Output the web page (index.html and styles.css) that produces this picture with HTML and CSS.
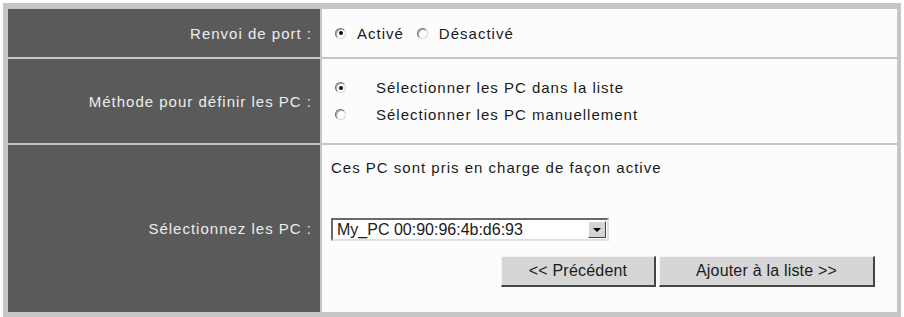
FILE: index.html
```html
<!DOCTYPE html>
<html>

<head>
    <title>Renvoi de port</title>
    <link rel="stylesheet" href="styles.css">
</head>

<body>
    <div class="frame">
        <div class="label row1">Renvoi de port :</div>
        <div class="value row1">
            <span class="choice"><span class="radio checked"></span>Activé</span>
            <span class="choice"><span class="radio"></span>Désactivé</span>
        </div>

        <div class="label row2">Méthode pour définir les PC :</div>
        <div class="value row2 stack">
            <div class="line"><span class="radio checked"></span><span class="wide">Sélectionner les PC dans la liste</span></div>
            <div class="line"><span class="radio"></span><span class="wide">Sélectionner les PC manuellement</span></div>
        </div>

        <div class="label row3">Sélectionnez les PC :</div>
        <div class="value row3 pcs">
            <div class="note">Ces PC sont pris en charge de façon active</div>
            <div class="select">
                <span class="select-text">My_PC 00:90:96:4b:d6:93</span>
                <span class="select-btn"><span class="arrow"></span></span>
            </div>
            <div class="button-container">
                <button class="btn prev">&lt;&lt; Précédent</button>
                <button class="btn add">Ajouter à la liste &gt;&gt;</button>
            </div>
        </div>
    </div>
</body>

</html>
```

FILE: styles.css
```css
body {
    margin: 3px 3px 0 3px;
    background-color: #fff;
    font-family: "Liberation Sans", Arial, sans-serif;
    font-size: 15px;
    letter-spacing: 1px;
    color: #1a1a1a;
}

.frame {
    display: grid;
    grid-template-columns: 312px 1fr;
    grid-template-rows: 48px 84px 167px;
    gap: 2px;
    background-color: #c6c6c6;
    padding: 6px 4px 5px 5px;
}

.label {
    background-color: #5a5a5a;
    color: #ededed;
    display: flex;
    align-items: center;
    justify-content: flex-end;
    padding-right: 8px;
}

.value {
    background-color: #fcfcfc;
    display: flex;
    align-items: center;
    padding-left: 13px;
}

.choice {
    display: inline-flex;
    align-items: center;
    margin-right: 13px;
}

.choice .radio {
    margin-right: 11px;
}

.radio {
    display: inline-block;
    box-sizing: border-box;
    width: 11px;
    height: 11px;
    border: 1px solid #6e6e6e;
    border-right-color: #d8d8d8;
    border-bottom-color: #d8d8d8;
    border-radius: 50%;
    background-color: #fff;
    box-shadow: inset 1px 1px 0 #a8a8a8;
    margin-right: 5px;
    position: relative;
}

.radio.checked::after {
    content: "";
    position: absolute;
    left: 2.5px;
    top: 2.5px;
    width: 4px;
    height: 4px;
    border-radius: 50%;
    background-color: #111;
}

.stack {
    flex-direction: column;
    align-items: flex-start;
    justify-content: center;
    gap: 10px;
}

.line {
    display: flex;
    align-items: center;
}

.line .radio {
    margin-right: 30px;
}

.pcs {
    flex-direction: column;
    align-items: flex-start;
    justify-content: flex-start;
    padding-top: 14px;
    padding-left: 9px;
}

.note {
    margin-bottom: 42px;
}

.select {
    display: flex;
    align-items: center;
    box-sizing: border-box;
    width: 278px;
    height: 23px;
    border: 2px solid #6a6a6a;
    border-right-color: #e0e0e0;
    border-bottom-color: #e0e0e0;
    background-color: #fff;
    font-size: 16px;
    letter-spacing: 0;
}

.select-text {
    flex: 1;
    padding-left: 4px;
}

.select-btn {
    box-sizing: border-box;
    width: 18px;
    height: 17px;
    margin-right: 1px;
    background-color: #d4d4d4;
    border: 1px solid #fff;
    border-right-color: #444;
    border-bottom-color: #444;
    display: flex;
    align-items: center;
    justify-content: center;
}

.arrow {
    width: 0;
    height: 0;
    border-left: 4px solid transparent;
    border-right: 4px solid transparent;
    border-top: 4px solid #000;
}

.button-container {
    display: flex;
    gap: 3px;
    margin-top: 15px;
    margin-left: 170px;
}

.btn {
    box-sizing: border-box;
    height: 31px;
    font-family: "Liberation Sans", Arial, sans-serif;
    font-size: 16px;
    letter-spacing: 0.2px;
    color: #1a1a1a;
    background-color: #d6d6d6;
    border: 1px solid #f4f4f4;
    border-right: 2px solid #444;
    border-bottom: 2px solid #444;
    padding: 0;
}

.btn.prev {
    width: 155px;
}

.btn.add {
    width: 216px;
}
```
